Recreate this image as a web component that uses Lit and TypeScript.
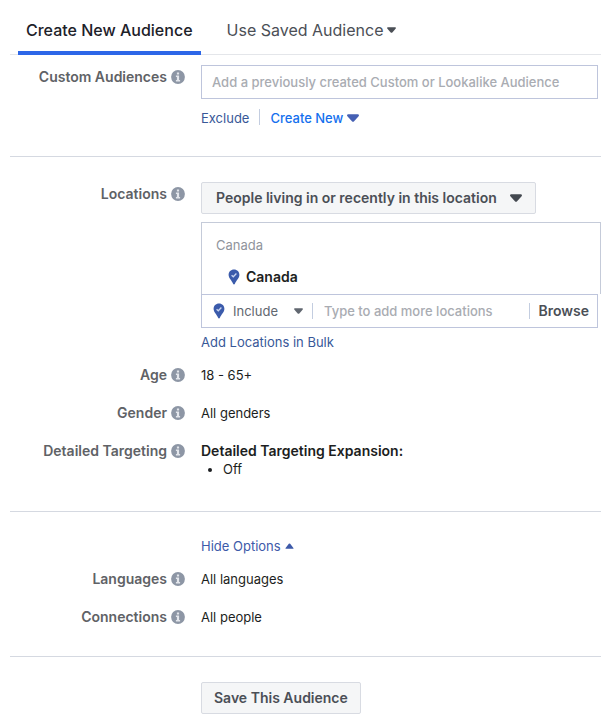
import { LitElement, html, css, svg } from "lit";
import { customElement, property } from "lit/decorators.js";

const caret = (up = false) => html`<svg class="caret" viewBox="0 0 12 8" aria-hidden="true">
  ${up
    ? svg`<path d="M1.2 7.6Q0 7.6.8 6.6L5.1 1.1Q6 .1 6.9 1.1L11.2 6.6Q12 7.6 10.8 7.6Z" />`
    : svg`<path d="M1.2.2Q0 .2.1 1.4L.6 2.4L4.9 7.2Q6 8.2 7.1 7.2L11.4 2.4L11.9 1.4Q12 .2 10.8.2Z" />`}
</svg>`;

const pin = html`<svg class="pin" viewBox="0 0 12 16" aria-hidden="true">
  <path fill="#3b5bab" d="M6 .5C2.8.5.6 2.8.6 5.8c0 3.6 3.2 5.6 4.5 9 .3.8 1.500.8 1.800 0 1.300-3.400 4.500-5.400 4.500-9C11.400 2.800 9.200.5 6 .5Z" />
  <path fill="none" stroke="#c9d5f0" stroke-width="1.300" d="M3.600 6.200 5.300 7.800 8.400 4.500" />
</svg>`;

@customElement("info-tip")
export class InfoTip extends LitElement {
  @property() topic = "";

  static styles = css`
    :host {
      display: flex;
      flex: none;
    }
    .tip {
      display: block;
      width: 14px;
      height: 14px;
      padding: 0;
      border: 0;
      background: none;
      cursor: pointer;
    }
    .glyph {
      display: block;
      width: 14px;
      height: 14px;
    }
  `;

  render() {
    return html`<button class="tip" type="button" aria-label="About ${this.topic}">
      <svg class="glyph" viewBox="0 0 14 14" aria-hidden="true">
        <circle cx="7" cy="7" r="6.900" fill="#8d96a5" />
        <path fill="#e3e6ec" d="M5.900 2.500h2.200v2H5.900zM4.900 5.600h3.200v4.300h1v1.500H4.900V9.900h1V7h-1z" />
      </svg>
    </button>`;
  }
}

@customElement("app-root")
export class AppRoot extends LitElement {
  static styles = css`
    :host {
      display: block;
      box-sizing: border-box;
      padding: 0 3px 4px 10px;
      background: #fff;
      color: #1c1e21;
      font: 400 13px/18px Inter, "Liberation Sans", sans-serif;
    }
    * {
      box-sizing: border-box;
    }
    button,
    input,
    select {
      font: inherit;
      color: inherit;
    }
    .tabs {
      display: flex;
      padding: 8px 8px 0;
      border-bottom: 1px solid #e4e6ea;
    }
    .tab {
      display: flex;
      align-items: center;
      gap: 4px;
      height: 47px;
      margin-bottom: -1px;
      padding: 0 8px;
      border: 0;
      border-bottom: 4px solid transparent;
      background: none;
      color: #4b4f56;
      font-size: 16px;
    }
    .tab.active {
      border-color: #2d67e8;
      color: #1d2129;
      font-weight: 500;
    }
    .tab + .tab {
      margin-left: 18px;
    }
    .section {
      display: grid;
      gap: 20px;
      padding: 25px 0 29px;
      border-bottom: 1px solid #d5d9e1;
    }
    .section.first {
      padding-top: 10px;
    }
    .section.places {
      padding-bottom: 33px;
    }
    .section.options {
      padding-bottom: 30px;
    }
    .section.last {
      padding-bottom: 0;
      border: 0;
    }
    .row {
      display: grid;
      grid-template-columns: 175px minmax(0, 1fr);
      column-gap: 16px;
    }
    .row.tight {
      margin-bottom: -5px;
    }
    .label {
      display: flex;
      justify-content: flex-end;
      align-items: center;
      align-self: start;
      gap: 4px;
      height: 18px;
      color: #606266;
      font-size: 14px;
      font-weight: 600;
    }
    .tall .label {
      margin-top: 3px;
    }
    .field {
      grid-column: 2;
      display: flex;
      flex-direction: column;
      align-items: flex-start;
    }
    .caret {
      flex: none;
      display: block;
      width: 12px;
      height: 8px;
      fill: currentColor;
      pointer-events: none;
    }
    .small .caret {
      width: 9px;
      height: 6px;
    }
    .pin {
      flex: none;
      display: block;
      width: 12px;
      height: 16px;
    }
    .entry {
      align-self: stretch;
      height: 34px;
      margin-right: 3px;
      padding: 0 10px;
      border: 1px solid #bec5dc;
      background: #fff;
      font-weight: 500;
    }
    ::placeholder {
      color: #a9acb2;
      opacity: 1;
    }
    .links {
      display: flex;
      margin-top: 10px;
    }
    .link {
      color: #385898;
      text-decoration: none;
    }
    .links .link {
      padding-right: 10px;
    }
    .textbutton {
      display: flex;
      align-items: center;
      gap: 4px;
      padding: 0;
      border: 0;
      background: none;
      color: #3d5aa9;
    }
    .create {
      color: #1470ee;
      padding-left: 10px;
      font-weight: 500;
    }
    .create .caret {
      color: #4560b4;
    }
    .bar {
      width: 1px;
      height: 16px;
      background: #c3cde0;
    }
    .picker {
      display: grid;
      align-items: center;
    }
    .picker .choice,
    .picker .caret {
      grid-area: 1 / 1;
    }
    .picker .caret {
      justify-self: end;
    }
    .choice {
      appearance: none;
      height: 32px;
      margin: 0;
      border: 0;
      background: none;
    }
    .scope .choice {
      padding: 0 38px 0 14px;
      border: 1px solid #d8dbe2;
      border-radius: 2px;
      background: #f5f6f7;
      color: #4b4f56;
      font-size: 14px;
      font-weight: 600;
    }
    .scope .caret {
      margin-right: 14px;
      color: #444950;
    }
    .chosen {
      align-self: stretch;
      margin-top: 8px;
      padding: 13px 14px 8px;
      border: 1px solid #c5cbd9;
      border-bottom: 0;
      color: #90949c;
    }
    .place {
      display: flex;
      align-items: center;
      gap: 6px;
      margin-top: 14px;
      padding-left: 12px;
      color: #1c1e21;
      font-size: 14px;
      font-weight: 600;
    }
    .adder {
      align-self: stretch;
      display: flex;
      align-items: center;
      height: 34px;
      margin-right: 3px;
      padding-left: 11px;
      border: 1px solid #bec5dc;
    }
    .mode {
      margin: 0 9px 0 8px;
      color: #616770;
    }
    .mode .choice {
      padding: 0 25px 0 0;
    }
    .search {
      flex: 1;
      min-width: 0;
      height: 32px;
      padding: 0 11px;
      border: 0;
      background: none;
      font-weight: 500;
    }
    .browse {
      padding: 0 8px;
      border: 0;
      background: none;
      color: #4b4f56;
      font-size: 14px;
      font-weight: 600;
    }
    .bulk {
      margin-top: 5px;
    }
    .strong {
      font-size: 14px;
      font-weight: 600;
    }
    .bullets {
      margin: 0;
      padding-left: 22px;
    }
    .save {
      height: 32px;
      padding: 0 12px;
      border: 1px solid #d8dbe2;
      border-radius: 2px;
      background: #f5f6f7;
      color: #4b4f56;
      font-size: 14px;
      font-weight: 600;
    }
  `;

  private fact(name: string, value: unknown) {
    return html`<div class="row">
      <div class="label">${name}<info-tip .topic=${name}></info-tip></div>
      <div class="field">${value}</div>
    </div>`;
  }

  render() {
    return html`
      <nav class="tabs">
        <button class="tab active" type="button">Create New Audience</button>
        <button class="tab small" type="button">Use Saved Audience ${caret()}</button>
      </nav>

      <section class="section first">
        <div class="row tall">
          <div class="label">
            <label for="custom">Custom Audiences</label><info-tip topic="Custom Audiences"></info-tip>
          </div>
          <div class="field">
            <input id="custom" class="entry" type="text" placeholder="Add a previously created Custom or Lookalike Audience" />
            <div class="links">
              <a class="link" href="#exclude">Exclude</a>
              <span class="bar"></span>
              <button class="textbutton create" type="button">Create New ${caret()}</button>
            </div>
          </div>
        </div>
      </section>

      <section class="section places">
        <div class="row tall tight">
          <div class="label">
            <label for="scope">Locations</label><info-tip topic="Locations"></info-tip>
          </div>
          <div class="field">
            <div class="picker scope">
              <select id="scope" class="choice">
                <option>People living in or recently in this location</option>
              </select>
              ${caret()}
            </div>
            <div class="chosen">
              <div>Canada</div>
              <div class="place">${pin}Canada</div>
            </div>
            <div class="adder">
              ${pin}
              <div class="picker mode small">
                <select class="choice" aria-label="Include or exclude">
                  <option>Include</option>
                </select>
                ${caret()}
              </div>
              <span class="bar"></span>
              <input class="search" type="text" aria-label="Add locations" placeholder="Type to add more locations" />
              <span class="bar"></span>
              <button class="browse" type="button">Browse</button>
            </div>
            <a class="link bulk" href="#bulk">Add Locations in Bulk</a>
          </div>
        </div>
        ${this.fact("Age", "18 - 65+")}
        ${this.fact("Gender", "All genders")}
        ${this.fact(
          "Detailed Targeting",
          html`<div class="strong">Detailed Targeting Expansion:</div>
            <ul class="bullets"><li>Off</li></ul>`
        )}
      </section>

      <section class="section options">
        <div class="row tight">
          <div class="field">
            <button class="textbutton small" type="button">Hide Options ${caret(true)}</button>
          </div>
        </div>
        ${this.fact("Languages", "All languages")}
        ${this.fact("Connections", "All people")}
      </section>

      <section class="section last">
        <div class="row">
          <div class="field">
            <button class="save" type="button">Save This Audience</button>
          </div>
        </div>
      </section>
    `;
  }
}
